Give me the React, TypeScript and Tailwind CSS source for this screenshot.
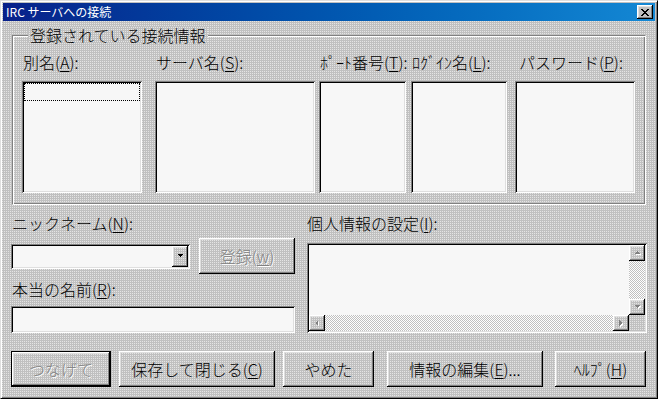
import React from "react";

const FACE =
  "bg-[#c0c0c0] bg-[conic-gradient(#e4e4e4_25%,#c0c0c0_0)] bg-[length:2px_2px]";
const SUNKEN =
  "shadow-[inset_1px_1px_0_#808080,inset_-1px_-1px_0_#ffffff,inset_2px_2px_0_#000000,inset_-2px_-2px_0_#dfdfdf]";
const RAISED =
  "shadow-[inset_-1px_-1px_0_#000000,inset_1px_1px_0_#ffffff,inset_-2px_-2px_0_#808080,inset_2px_2px_0_#dfdfdf]";
const DISABLED = "text-[#808080] [text-shadow:1px_1px_0_#ffffff]";
const TRACK =
  "bg-[conic-gradient(#ffffff_25%,#c0c0c0_0_50%,#ffffff_0_75%,#c0c0c0_0)] bg-[length:2px_2px]";

function M({ children }: { children: React.ReactNode }) {
  return <span className="underline decoration-1 underline-offset-[2px]">{children}</span>;
}

function Arrow({ dir, color = "#000000" }: { dir: "up" | "down" | "left" | "right"; color?: string }) {
  const pts: Record<string, string> = {
    up: "1,5 4,2 7,5",
    down: "1,2 7,2 4,5",
    left: "5,1 5,7 2,4",
    right: "2,1 2,7 5,4",
  };
  const disabled = color !== "#000000";
  return (
    <svg width="8" height="8" viewBox="0 0 8 8" shapeRendering="crispEdges">
      {disabled && (
        <polygon points={pts[dir]} fill="#ffffff" transform="translate(1,1)" />
      )}
      <polygon points={pts[dir]} fill={color} />
    </svg>
  );
}

function ListCol({
  w,
  ml,
  label,
  focus,
}: {
  w: string;
  ml: string;
  label: React.ReactNode;
  focus?: boolean;
}) {
  return (
    <div className={`flex flex-col ${w} ${ml}`}>
      <div className="h-[16px] pl-[1px] whitespace-nowrap">{label}</div>
      <div className={`mt-[11px] h-[112px] bg-[#f7f7f7] p-[2px] ${SUNKEN}`}>
        {focus && <div className="h-[18px] border border-dotted border-black" />}
      </div>
    </div>
  );
}

function Btn({
  w,
  ml,
  children,
  disabled,
  def,
  h = "h-[36px]",
}: {
  w: string;
  ml?: string;
  children: React.ReactNode;
  disabled?: boolean;
  def?: boolean;
  h?: string;
}) {
  return (
    <div
      className={`${w} ${h} ${ml ?? ""} ${def ? "border border-black" : ""} ${FACE} flex`}
    >
      <div
        className={`flex-1 flex items-center justify-center whitespace-nowrap ${RAISED} ${
          disabled ? DISABLED : ""
        }`}
      >
        <span>{children}</span>
      </div>
    </div>
  );
}

export default function App() {
  return (
    <div className="w-[658px] h-[399px] font-['Noto_Sans_CJK_JP',sans-serif] font-light text-[16px] leading-[16px] text-black">
      <div
        className={`w-full h-full flex flex-col p-[2px] border border-t-[#dfdfdf] border-l-[#dfdfdf] border-r-black border-b-black shadow-[inset_1px_1px_0_#ffffff,inset_-1px_-1px_0_#808080] ${FACE}`}
      >
        {/* Title bar */}
        <div className="h-[18px] flex items-center pl-[3px] pr-[2px] bg-linear-to-r from-[#08208a] to-[#1488d4]">
          <span className="flex-1 text-white text-[12px] leading-[12px] font-normal">IRC サーバへの接続</span>
          <div className={`w-[16px] h-[14px] bg-[#c0c0c0] flex items-center justify-center ${RAISED}`}>
            <svg width="8" height="7" viewBox="0 0 8 7" shapeRendering="crispEdges">
              <path d="M0 0h2v1h1v1h2v-1h1v-1h2v1h-1v1h-1v1h-1v1h1v1h1v1h1v1h-2v-1h-1v-1h-2v1h-1v1h-2v-1h1v-1h1v-1h1v-1h-1v-1h-1v-1h-1z" fill="#000" />
            </svg>
          </div>
        </div>

        {/* Body */}
        <div className="flex-1 flex flex-col px-[8px]">
          <fieldset
            className={`mt-[6px] mx-[1px] pl-[9px] pt-[11px] pb-[11px] border border-t-[#808080] border-l-[#808080] border-r-white border-b-white shadow-[inset_1px_1px_0_#ffffff,inset_-1px_-1px_0_#808080]`}
          >
            <legend className={`ml-[6px] px-[2px] leading-[16px] ${FACE}`}>
              登録されている接続情報
            </legend>
            <div className="flex">
              <ListCol w="w-[120px]" ml="" label={<>別名(<M>A</M>):</>} focus />
              <ListCol w="w-[160px]" ml="ml-[13px]" label={<>サーバ名(<M>S</M>):</>} />
              <ListCol w="w-[87px]" ml="ml-[4px]" label={<>ﾎﾟｰﾄ番号(<M>T</M>):</>} />
              <ListCol w="w-[96px]" ml="ml-[5px]" label={<>ﾛｸﾞｲﾝ名(<M>L</M>):</>} />
              <ListCol w="w-[120px]" ml="ml-[8px]" label={<><span className="pl-[3px]">パスワード(<M>P</M>):</span></>} />
            </div>
          </fieldset>

          <div className="mt-[10px] flex">
            <div className="w-[284px] flex flex-col">
              <div className="h-[16px] pl-[1px]">
                ニックネーム(<M>N</M>):
              </div>
              <div className="mt-[7px] flex items-center">
                <div className={`w-[179px] h-[25px] bg-[#f7f7f7] flex items-center justify-end pr-[2px] ${SUNKEN}`}>
                  <div className={`w-[16px] h-[21px] flex items-center justify-center ${FACE} ${RAISED}`}>
                    <Arrow dir="down" />
                  </div>
                </div>
                <Btn w="w-[96px]" ml="ml-[9px]" disabled>
                  登録(<M>w</M>)
                </Btn>
              </div>
              <div className="mt-[7px] h-[16px] pl-[1px]">
                本当の名前(<M>R</M>):
              </div>
              <div className={`mt-[9px] h-[27px] bg-[#f7f7f7] ${SUNKEN}`} />
            </div>

            <div className="ml-[12px] flex-1 flex flex-col">
              <div className="h-[16px]">
                個人情報の設定(<M>I</M>):
              </div>
              <div className={`mt-[12px] h-[90px] p-[2px] flex flex-col bg-[#f7f7f7] ${SUNKEN}`}>
                <div className="flex-1 flex">
                  <div className="flex-1" />
                  <div className="w-[16px] flex flex-col">
                    <div className={`h-[16px] flex items-center justify-center ${FACE} ${RAISED}`}>
                      <Arrow dir="up" color="#808080" />
                    </div>
                    <div className={`flex-1 ${TRACK}`} />
                    <div className={`h-[16px] flex items-center justify-center ${FACE} ${RAISED}`}>
                      <Arrow dir="down" color="#808080" />
                    </div>
                  </div>
                </div>
                <div className="h-[16px] flex">
                  <div className={`w-[16px] flex items-center justify-center ${FACE} ${RAISED}`}>
                    <Arrow dir="left" color="#808080" />
                  </div>
                  <div className={`flex-1 ${TRACK}`} />
                  <div className={`w-[16px] flex items-center justify-center ${FACE} ${RAISED}`}>
                    <Arrow dir="right" color="#808080" />
                  </div>
                  <div className={`w-[16px] ${FACE}`} />
                </div>
              </div>
            </div>
          </div>

          <div className="mt-[18px] flex">
            <Btn w="w-[100px]" def disabled>
              つなげて
            </Btn>
            <Btn w="w-[156px]" ml="ml-[8px]">
              保存して閉じる(<M>C</M>)
            </Btn>
            <Btn w="w-[91px]" ml="ml-[8px]">
              やめた
            </Btn>
            <Btn w="w-[156px]" ml="ml-[13px]">
              情報の編集(<M>E</M>)...
            </Btn>
            <Btn w="w-[91px]" ml="ml-[12px]">
              ﾍﾙﾌﾟ(<M>H</M>)
            </Btn>
          </div>
        </div>
      </div>
    </div>
  );
}
